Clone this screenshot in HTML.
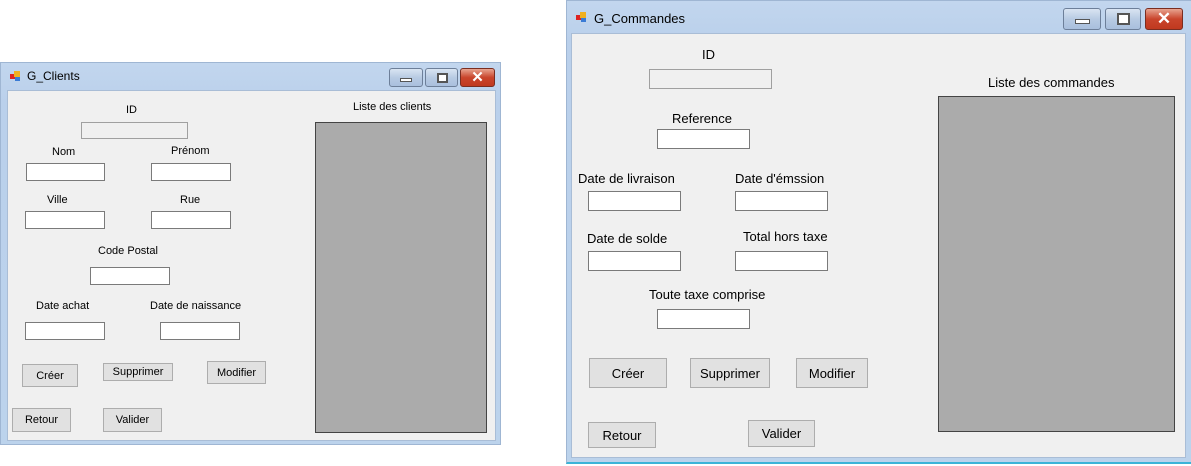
<!DOCTYPE html><html><head><style>
*{margin:0;padding:0;box-sizing:border-box}
body{width:1191px;height:466px;background:#fff;position:relative;overflow:hidden;font-family:"Liberation Sans",sans-serif;color:#000}
.a{position:absolute}
.frame{position:absolute;background:linear-gradient(#c2d6ee,#bad0eb 40px,#bcd3ec);border:1px solid #9fb6d3}
.client{position:absolute;background:#f0f0f0;border:1px solid #a9bdd6}
.t{position:absolute;white-space:nowrap}
.in{position:absolute;background:#fff;border:1px solid #7a7a7a}
.in.d{background:#f0f0f0;border-color:#a0a0a0}
.btn{position:absolute;background:#e1e1e1;border:1px solid #adadad;display:flex;align-items:center;justify-content:center}
.box{position:absolute;background:#ababab;border:1px solid #444}
.wb{position:absolute;border:1px solid #6d7f99;border-radius:3px;background:linear-gradient(#d9e4f2,#b8cbe3 50%,#a9bfdd)}
.wb.c{background:linear-gradient(#e8a490,#c9452c 50%,#c0391f);border-color:#7a2d20}
.ic{position:absolute;width:10px;height:10px}
</style></head><body>
<!-- left window -->
<div class="frame" style="left:0;top:62px;width:501px;height:383px"></div>
<div class="ic" style="left:10px;top:71px"><div class="a" style="left:0;top:3px;width:5px;height:5px;background:#d22"></div><div class="a" style="left:4px;top:0;width:6px;height:6px;background:#f0b020"></div><div class="a" style="left:5px;top:6px;width:5px;height:4px;background:#3a7bd5"></div></div>
<div class="t" style="left:27px;top:69px;font-size:12px">G_Clients</div>
<div class="wb" style="left:389px;top:68px;width:34px;height:19px"><div class="a" style="left:10px;top:9px;width:12px;height:4px;background:#fff;border:1px solid #555"></div></div>
<div class="wb" style="left:425px;top:68px;width:33px;height:19px"><div class="a" style="left:11px;top:4px;width:11px;height:10px;border:2px solid #555;background:#fff"></div></div>
<div class="wb c" style="left:460px;top:68px;width:35px;height:19px;color:#fff;font-weight:bold;font-size:15px;text-align:center;line-height:17px">✕</div>
<div class="client" style="left:7px;top:90px;width:489px;height:351px"></div>
<div style="font-size:11px">
<div class="t" style="left:126px;top:104px">ID</div>
<div class="in d" style="left:81px;top:122px;width:107px;height:17px"></div>
<div class="t" style="left:52px;top:146px">Nom</div>
<div class="t" style="left:171px;top:145px">Prénom</div>
<div class="in" style="left:26px;top:163px;width:79px;height:18px"></div>
<div class="in" style="left:151px;top:163px;width:80px;height:18px"></div>
<div class="t" style="left:47px;top:194px">Ville</div>
<div class="t" style="left:180px;top:194px">Rue</div>
<div class="in" style="left:25px;top:211px;width:80px;height:18px"></div>
<div class="in" style="left:151px;top:211px;width:80px;height:18px"></div>
<div class="t" style="left:98px;top:245px">Code Postal</div>
<div class="in" style="left:90px;top:267px;width:80px;height:18px"></div>
<div class="t" style="left:36px;top:300px">Date achat</div>
<div class="t" style="left:150px;top:300px">Date de naissance</div>
<div class="in" style="left:25px;top:322px;width:80px;height:18px"></div>
<div class="in" style="left:160px;top:322px;width:80px;height:18px"></div>
<div class="btn" style="left:22px;top:364px;width:56px;height:23px">Créer</div>
<div class="btn" style="left:103px;top:363px;width:70px;height:18px">Supprimer</div>
<div class="btn" style="left:207px;top:361px;width:59px;height:23px">Modifier</div>
<div class="btn" style="left:12px;top:408px;width:59px;height:24px">Retour</div>
<div class="btn" style="left:103px;top:408px;width:59px;height:24px">Valider</div>
<div class="t" style="left:353px;top:101px">Liste des clients</div>
</div>
<div class="box" style="left:315px;top:122px;width:172px;height:311px"></div>

<!-- right window -->
<div class="frame" style="left:566px;top:0;width:626px;height:464px;border-bottom:2px solid #3cb4d8"></div>
<div class="ic" style="left:576px;top:12px"><div class="a" style="left:0;top:3px;width:5px;height:5px;background:#d22"></div><div class="a" style="left:4px;top:0;width:6px;height:6px;background:#f0b020"></div><div class="a" style="left:5px;top:6px;width:5px;height:4px;background:#3a7bd5"></div></div>
<div class="t" style="left:594px;top:11px;font-size:13px">G_Commandes</div>
<div class="wb" style="left:1063px;top:8px;width:38px;height:22px"><div class="a" style="left:11px;top:10px;width:15px;height:5px;background:#fff;border:1px solid #555"></div></div>
<div class="wb" style="left:1105px;top:8px;width:36px;height:22px"><div class="a" style="left:11px;top:4px;width:13px;height:12px;border:2px solid #555;background:#fff"></div></div>
<div class="wb c" style="left:1145px;top:8px;width:38px;height:22px;color:#fff;font-weight:bold;font-size:17px;text-align:center;line-height:20px">✕</div>
<div class="client" style="left:571px;top:33px;width:615px;height:425px"></div>
<div style="font-size:13px">
<div class="t" style="left:702px;top:47px">ID</div>
<div class="in d" style="left:649px;top:69px;width:123px;height:20px"></div>
<div class="t" style="left:672px;top:111px">Reference</div>
<div class="in" style="left:657px;top:129px;width:93px;height:20px"></div>
<div class="t" style="left:578px;top:171px">Date de livraison</div>
<div class="t" style="left:735px;top:171px">Date d'émssion</div>
<div class="in" style="left:588px;top:191px;width:93px;height:20px"></div>
<div class="in" style="left:735px;top:191px;width:93px;height:20px"></div>
<div class="t" style="left:587px;top:231px">Date de solde</div>
<div class="t" style="left:743px;top:229px">Total hors taxe</div>
<div class="in" style="left:588px;top:251px;width:93px;height:20px"></div>
<div class="in" style="left:735px;top:251px;width:93px;height:20px"></div>
<div class="t" style="left:649px;top:287px">Toute taxe comprise</div>
<div class="in" style="left:657px;top:309px;width:93px;height:20px"></div>
<div class="btn" style="left:589px;top:358px;width:78px;height:30px">Créer</div>
<div class="btn" style="left:690px;top:358px;width:80px;height:30px">Supprimer</div>
<div class="btn" style="left:796px;top:358px;width:72px;height:30px">Modifier</div>
<div class="btn" style="left:588px;top:422px;width:68px;height:26px">Retour</div>
<div class="btn" style="left:748px;top:420px;width:67px;height:27px">Valider</div>
<div class="t" style="left:988px;top:75px">Liste des commandes</div>
</div>
<div class="box" style="left:938px;top:96px;width:237px;height:336px"></div>
</body></html>
